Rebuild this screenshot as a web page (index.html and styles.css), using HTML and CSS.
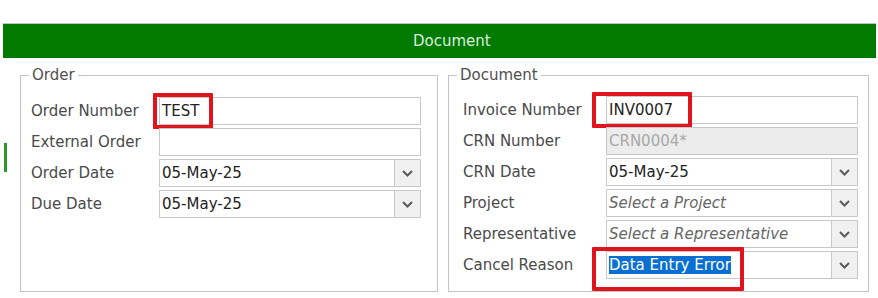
FILE: index.html
```html
<!DOCTYPE html>
<html lang="en">
<head>
    <meta charset="UTF-8">
    <title>Document</title>
    <link rel="stylesheet" href="styles.css">
</head>
<body>
    <div class="header">Document</div>
    <div class="side-tick"></div>

    <div class="panels">
        <fieldset class="group group-order">
            <legend>Order</legend>
            <div class="rows">
                <label>Order Number</label>
                <div class="field">
                    <span class="value">TEST</span>
                    <span class="mark mark-order"></span>
                </div>

                <label>External Order</label>
                <div class="field"></div>

                <label>Order Date</label>
                <div class="field combo">
                    <span class="value">05-May-25</span>
                    <span class="drop"><svg width="11" height="7" viewBox="0 0 11 7"><path d="M1 1l4.5 4.5L10 1" fill="none" stroke="#5a5a5a" stroke-width="2"/></svg></span>
                </div>

                <label>Due Date</label>
                <div class="field combo">
                    <span class="value">05-May-25</span>
                    <span class="drop"><svg width="11" height="7" viewBox="0 0 11 7"><path d="M1 1l4.5 4.5L10 1" fill="none" stroke="#5a5a5a" stroke-width="2"/></svg></span>
                </div>
            </div>
        </fieldset>

        <fieldset class="group group-doc">
            <legend>Document</legend>
            <div class="rows">
                <label>Invoice Number</label>
                <div class="field">
                    <span class="value">INV0007</span>
                    <span class="mark mark-invoice"></span>
                </div>

                <label>CRN Number</label>
                <div class="field disabled">
                    <span class="value">CRN0004*</span>
                </div>

                <label>CRN Date</label>
                <div class="field combo">
                    <span class="value">05-May-25</span>
                    <span class="drop"><svg width="11" height="7" viewBox="0 0 11 7"><path d="M1 1l4.5 4.5L10 1" fill="none" stroke="#5a5a5a" stroke-width="2"/></svg></span>
                </div>

                <label>Project</label>
                <div class="field combo">
                    <span class="value placeholder">Select a Project</span>
                    <span class="drop"><svg width="11" height="7" viewBox="0 0 11 7"><path d="M1 1l4.5 4.5L10 1" fill="none" stroke="#5a5a5a" stroke-width="2"/></svg></span>
                </div>

                <label>Representative</label>
                <div class="field combo">
                    <span class="value placeholder">Select a Representative</span>
                    <span class="drop"><svg width="11" height="7" viewBox="0 0 11 7"><path d="M1 1l4.5 4.5L10 1" fill="none" stroke="#5a5a5a" stroke-width="2"/></svg></span>
                </div>

                <label>Cancel Reason</label>
                <div class="field combo">
                    <span class="value"><span class="selected">Data Entry Error</span></span>
                    <span class="drop"><svg width="11" height="7" viewBox="0 0 11 7"><path d="M1 1l4.5 4.5L10 1" fill="none" stroke="#5a5a5a" stroke-width="2"/></svg></span>
                    <span class="mark mark-cancel"></span>
                </div>
            </div>
        </fieldset>
    </div>
</body>
</html>
```

FILE: styles.css
```css
body {
    margin: 0;
    font-family: Tahoma, "DejaVu Sans", sans-serif;
    font-size: 15px;
    color: #444;
    background: #fff;
    position: relative;
}
.header {
    margin: 23px 2px 0 3px;
    height: 34px;
    border-top: 1px solid #b8c8b8;
    background: #007a00;
    color: #dcefdc;
    line-height: 34px;
    padding-left: 410px;
}
.side-tick {
    position: absolute;
    left: 4px;
    top: 143px;
    width: 3px;
    height: 29px;
    background: #2a9a2a;
}
.panels {
    display: flex;
    gap: 10px;
    margin: 8px 0 0 20px;
}
.group {
    margin: 0;
    padding: 0;
    border: 1px solid #c4c4c4;
    box-sizing: border-box;
    height: 226px;
}
.group legend {
    padding: 0 3px;
    color: #505050;
    line-height: 18px;
}
.group-order {
    width: 418px;
    padding: 13px 16px 0 10px;
}
.group-order legend {
    margin-left: -2px;
}
.group-doc {
    width: 421px;
    padding: 12px 10px 0 14px;
}
.group-doc legend {
    margin-left: -6px;
}
.rows {
    display: grid;
    row-gap: 3px;
    grid-auto-rows: 28px;
    align-items: center;
}
.group-order .rows {
    grid-template-columns: 128px 1fr;
}
.group-doc .rows {
    grid-template-columns: 143px 1fr;
}
.rows label {
    color: #4a4a4a;
    white-space: nowrap;
}
.field {
    position: relative;
    height: 28px;
    box-sizing: border-box;
    border: 1px solid #c8c8c8;
    background: #fff;
    display: flex;
    align-items: center;
}
.value {
    flex: 1;
    padding-left: 2px;
    color: #222;
    white-space: nowrap;
    overflow: hidden;
}
.placeholder {
    font-style: italic;
    color: #666;
}
.disabled {
    background: #ececec;
}
.disabled .value {
    color: #a8a8a8;
}
.selected {
    background: #0a6fd0;
    color: #fff;
    padding: 1px 0;
}
.drop {
    width: 26px;
    height: 100%;
    box-sizing: border-box;
    border-left: 1px solid #c8c8c8;
    background: #f0f0f0;
    display: flex;
    align-items: center;
    justify-content: center;
}
.mark {
    position: absolute;
    border: 4px solid #e0141c;
    box-sizing: border-box;
    border-radius: 1px;
}
.mark-order {
    left: -7px;
    top: -5px;
    width: 60px;
    height: 36px;
}
.mark-invoice {
    left: -15px;
    top: -5px;
    width: 100px;
    height: 36px;
}
.mark-cancel {
    left: -15px;
    top: -5px;
    width: 152px;
    height: 44px;
}
```
